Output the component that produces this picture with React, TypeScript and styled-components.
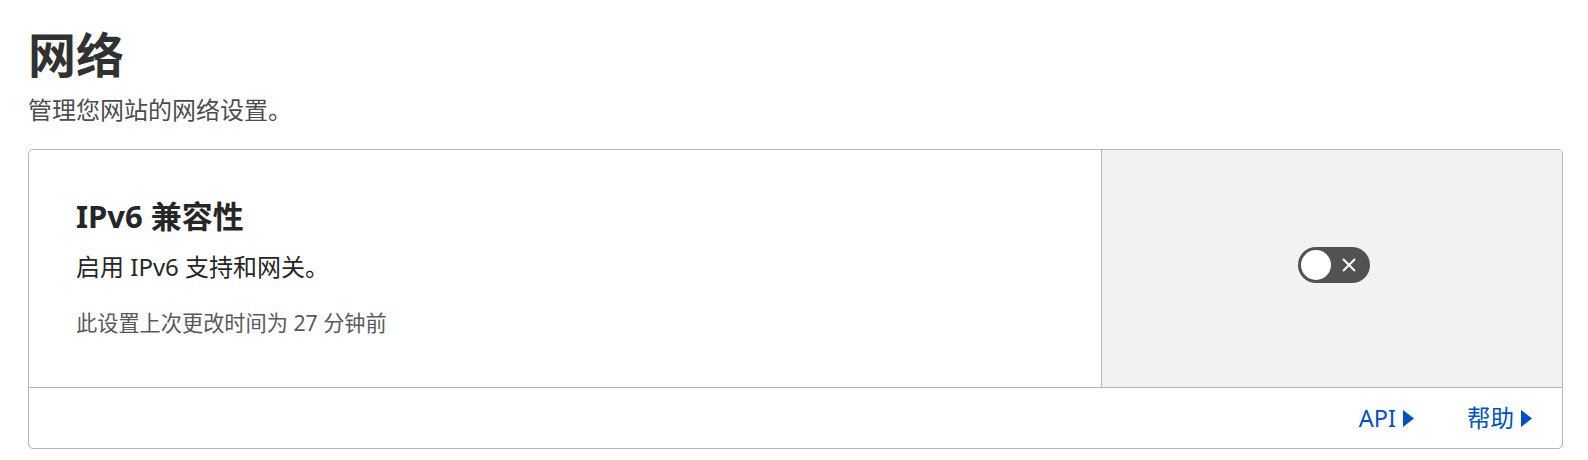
import React from "react";
import styled, { createGlobalStyle } from "styled-components";

const GlobalStyle = createGlobalStyle`
  html, body {
    margin: 0;
    padding: 0;
    background: #ffffff;
  }
  body {
    font-family: "Noto Sans", "Noto Sans CJK SC", sans-serif;
    color: #313131;
  }
`;

const Page = styled.main`
  padding: 26px 25px 12px 28px;
`;

const Title = styled.h1`
  margin: 0;
  font-size: 48px;
  line-height: 58px;
  font-weight: 700;
  color: #313131;
`;

const Subtitle = styled.p`
  margin: 10px 0 0;
  font-size: 24px;
  line-height: 32px;
  color: #4d4d4d;
`;

const Card = styled.section`
  margin-top: 23px;
  border: 1px solid #b6b6b6;
  border-radius: 5px;
  overflow: hidden;
`;

const CardBody = styled.div`
  display: grid;
  grid-template-columns: 70% 30%;
  min-height: 237px;
`;

const Info = styled.div`
  padding: 48px 48px 50px 47px;
  border-right: 1px solid #b6b6b6;
  display: flex;
  flex-direction: column;
`;

const CardTitle = styled.h2`
  margin: 0;
  font-size: 31px;
  line-height: 36px;
  font-weight: 700;
  color: #262626;
`;

const Description = styled.p`
  margin: 18px 0 0;
  font-size: 24px;
  line-height: 30px;
  color: #262626;
`;

const Meta = styled.p`
  margin: 27px 0 0;
  font-size: 21.2px;
  line-height: 28px;
  color: #595959;
`;

const Control = styled.div`
  background: #f2f2f2;
  display: flex;
  align-items: center;
  justify-content: center;
  padding: 0 0 8px 4px;
`;

const Switch = styled.button`
  position: relative;
  width: 72px;
  height: 36px;
  border: none;
  border-radius: 18px;
  background: #525252;
  padding: 0 13px 0 0;
  cursor: pointer;
  display: flex;
  align-items: center;
  justify-content: flex-end;
  box-sizing: border-box;
`;

const Knob = styled.span`
  position: absolute;
  left: 3px;
  top: 3px;
  width: 30px;
  height: 30px;
  border-radius: 50%;
  background: #ffffff;
`;

const Footer = styled.footer`
  border-top: 1px solid #b6b6b6;
  height: 60px;
  display: flex;
  align-items: center;
  justify-content: flex-end;
  gap: 53px;
  padding-right: 30px;
`;

const Link = styled.a`
  display: inline-flex;
  align-items: center;
  gap: 7px;
  font-size: 23.5px;
  line-height: 30px;
  color: #0051c3;
  text-decoration: none;
`;

const Caret = () => (
  <svg width="11" height="17" viewBox="0 0 11 17" aria-hidden="true">
    <path d="M0 0 L11 8.5 L0 17 Z" fill="#0051c3" />
  </svg>
);

const CrossIcon = () => (
  <svg width="16" height="16" viewBox="0 0 16 16" aria-hidden="true">
    <path
      d="M2 2 L14 14 M14 2 L2 14"
      stroke="#ffffff"
      strokeWidth="2"
      strokeLinecap="butt"
      fill="none"
    />
  </svg>
);

export default function App() {
  return (
    <>
      <GlobalStyle />
      <Page>
        <Title>网络</Title>
        <Subtitle>管理您网站的网络设置。</Subtitle>
        <Card>
          <CardBody>
            <Info>
              <CardTitle>IPv6 兼容性</CardTitle>
              <Description>启用 IPv6 支持和网关。</Description>
              <Meta>此设置上次更改时间为 27 分钟前</Meta>
            </Info>
            <Control>
              <Switch role="switch" aria-checked="false" aria-label="IPv6 兼容性">
                <Knob />
                <CrossIcon />
              </Switch>
            </Control>
          </CardBody>
          <Footer>
            <Link href="#">
              API
              <Caret />
            </Link>
            <Link href="#">
              帮助
              <Caret />
            </Link>
          </Footer>
        </Card>
      </Page>
    </>
  );
}
